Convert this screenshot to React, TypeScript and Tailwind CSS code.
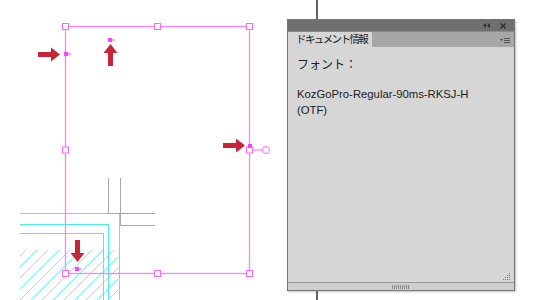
import React from 'react';

const Handle = ({ x, y }: { x: number; y: number }) => (
  <rect x={x - 3} y={y - 3} width={6} height={6} fill="white" stroke="#ff66ff" strokeWidth={1} />
);

const ArrowRight = ({ x, y }: { x: number; y: number }) => (
  <path d={`M${x} ${y - 2.5} h13 v-4.5 l9 7 l-9 7 v-4.5 h-13 z`} fill="#c8243a" />
);

const ArrowUp = ({ x, y }: { x: number; y: number }) => (
  <path d={`M${x - 2.5} ${y + 22} v-13 h-4.5 l7 -9 l7 9 h-4.5 v13 z`} fill="#c8243a" />
);

const ArrowDown = ({ x, y }: { x: number; y: number }) => (
  <path d={`M${x - 2.5} ${y} v13 h-4.5 l7 9 l7 -9 h-4.5 v-13 z`} fill="#c8243a" />
);

const Canvas = () => {
  const hatch = [];
  for (let i = -66; i < 140; i += 11) {
    hatch.push(<line key={i} x1={20 + i} y1={300} x2={70 + i} y2={250} stroke="#6ff2f2" strokeWidth={1} />);
  }
  return (
    <svg width={287} height={300} className="block">
      <defs>
        <clipPath id="hatchClip">
          <rect x={20} y={250} width={98} height={50} />
        </clipPath>
      </defs>
      <g clipPath="url(#hatchClip)">{hatch}</g>
      {/* cyan frames */}
      <g stroke="#3ff0f0" strokeWidth={1} fill="none">
        <polyline points="20,213.5 119.5,213.5 119.5,300" />
        <polyline points="20,224.5 108.5,224.5 108.5,300" />
        <polyline points="20,233.5 103.5,233.5 103.5,300" />
      </g>
      {/* gray lines */}
      <g stroke="#a8a8a8" strokeWidth={1} fill="none">
        <polyline points="108.5,178 108.5,213.5 155,213.5" />
        <polyline points="120.5,178 120.5,225.5 155,225.5" />
      </g>
      {/* magenta selection frame */}
      <rect x={65.5} y={26.5} width={184} height={247} fill="none" stroke="#ff7dff" strokeWidth={1.3} />
      <line x1={250} y1={150} x2={263} y2={150} stroke="#ff66ff" />
      <circle cx={266} cy={150} r={3.5} fill="white" stroke="#ff66ff" />
      <Handle x={65.5} y={26.5} />
      <Handle x={157.5} y={26.5} />
      <Handle x={249.5} y={26.5} />
      <Handle x={65.5} y={150} />
      <Handle x={249.5} y={150} />
      <Handle x={65.5} y={273.5} />
      <Handle x={157.5} y={273.5} />
      <Handle x={249.5} y={273.5} />
      {/* small reference points */}
      <g fill="#ff44ff">
        <rect x={108} y={38} width={4} height={4} />
        <rect x={112} y={39.5} width={3} height={1} />
        <rect x={64} y={52} width={4} height={4} />
        <rect x={68} y={53.5} width={3} height={1} />
        <rect x={248} y={144} width={4} height={4} />
        <rect x={75} y={267} width={4} height={4} />
        <rect x={79} y={268.5} width={3} height={1} />
      </g>
      <ArrowRight x={38} y={54.5} />
      <ArrowUp x={110.5} y={44} />
      <ArrowRight x={223} y={145.5} />
      <ArrowDown x={77.5} y={240} />
    </svg>
  );
};

const Panel = () => (
  <div className="flex w-[228px] h-[272px] flex-col border border-[#777] bg-[#d6d6d6] shadow-[1px_1px_2px_rgba(0,0,0,0.25)]">
    <div className="flex h-[11px] items-center justify-end gap-[10px] bg-[#6f6f6f] pr-[8px] text-[#2a2a2a]">
      <svg width={7} height={5}>
        <path d="M3 0 L0 2.5 L3 5 Z M7 0 L4 2.5 L7 5 Z" fill="#2e2e2e" />
      </svg>
      <svg width={6} height={6}>
        <path d="M0.5 0.5 L5.5 5.5 M5.5 0.5 L0.5 5.5" stroke="#2e2e2e" strokeWidth={1.4} />
      </svg>
    </div>
    <div className="flex h-[16px] items-stretch bg-[#a7a7a7] border-t border-[#8a8a8a]">
      <div className="flex w-[84px] items-center overflow-hidden whitespace-nowrap bg-[#d6d6d6] pl-[8px] text-[10.5px] leading-none text-[#222] font-['Noto_Sans_CJK_JP',sans-serif] tracking-[-1.6px]">
        ドキュメント情報
      </div>
      <div className="flex flex-1 items-center justify-end pr-[4px]">
        <svg width={10} height={6}>
          <path d="M0 2 L3 2 L1.5 4 Z" fill="#444" />
          <path d="M4 1.5 H10 M4 3.5 H10 M4 5.5 H10" stroke="#555" strokeWidth={1} />
        </svg>
      </div>
    </div>
    <div className="flex-1 px-[9px] pt-[8px] text-[12px] text-[#1c1c1c] font-['Noto_Sans_CJK_JP',sans-serif]">
      <div className="leading-[18px]">フォント：</div>
      <div className="mt-[13px] leading-[16px] text-[11.3px] font-['Liberation_Sans','Noto_Sans_CJK_JP',sans-serif]">
        KozGoPro-Regular-90ms-RKSJ-H
        <br />
        (OTF)
      </div>
    </div>
    <div className="flex h-[9px] justify-end pr-[3px] pb-[1px] items-end">
      <svg width={9} height={9}>
        <g fill="#777">
          <rect x={7} y={1} width={1} height={1} />
          <rect x={5} y={3} width={1} height={1} />
          <rect x={7} y={3} width={1} height={1} />
          <rect x={3} y={5} width={1} height={1} />
          <rect x={5} y={5} width={1} height={1} />
          <rect x={7} y={5} width={1} height={1} />
          <rect x={1} y={7} width={1} height={1} />
          <rect x={3} y={7} width={1} height={1} />
          <rect x={5} y={7} width={1} height={1} />
          <rect x={7} y={7} width={1} height={1} />
        </g>
      </svg>
    </div>
    <div className="flex h-[8px] items-center justify-center border-t border-[#9a9a9a] bg-[#cfcfcf]">
      <div className="h-[4px] w-[18px] bg-[repeating-linear-gradient(90deg,#8a8a8a_0px,#8a8a8a_1px,transparent_1px,transparent_2px)]" />
    </div>
  </div>
);

export default function App() {
  return (
    <div className="relative flex h-[300px] w-[550px] overflow-hidden bg-white">
      <Canvas />
      <div className="flex flex-col">
        <div className="h-[19px] w-[31px] border-r-2 border-[#666]" />
        <Panel />
        <div className="h-[9px] w-[31px] border-r-2 border-[#666]" />
      </div>
    </div>
  );
}
